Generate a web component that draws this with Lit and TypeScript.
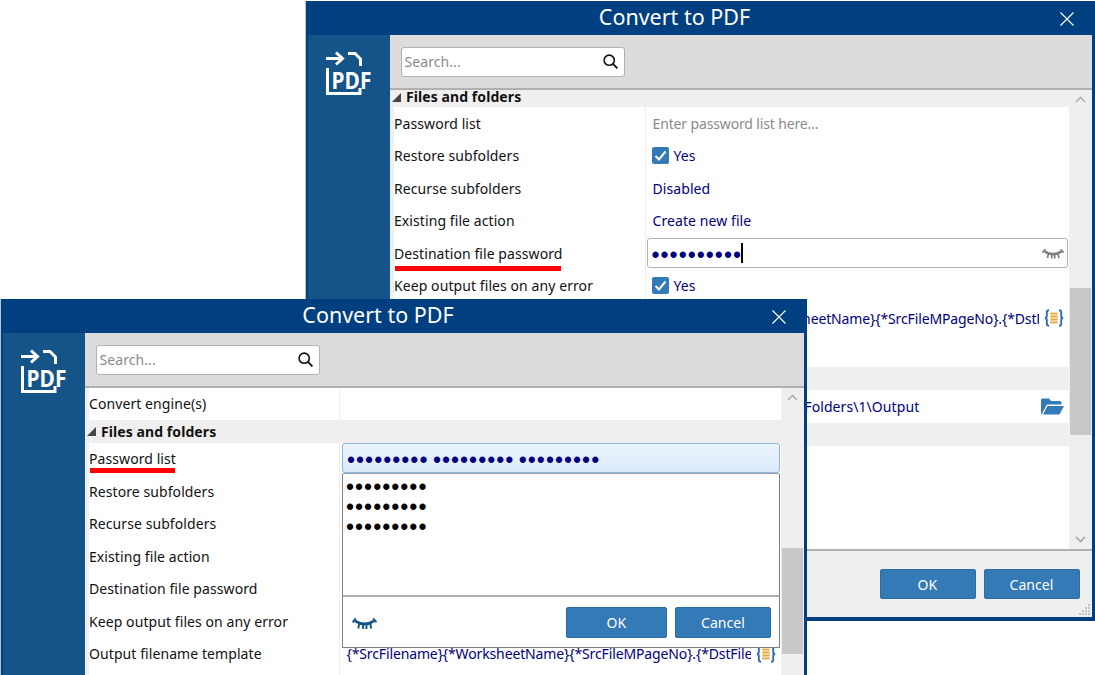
import { LitElement, html, css } from "lit";
import { customElement } from "lit/decorators.js";

const logo = html`<svg class="logo" viewBox="0 0 50 50" width="50" height="50">
  <g fill="none" stroke="#fff" stroke-width="3">
    <path d="M2 8.5H18M12 2.5L18.5 8.5L12 14.5"/>
    <path d="M24 3.5H31L36.5 9V16"/>
    <path d="M3.5 18V43.5H36V38"/>
  </g>
  <text x="7.5" y="38.5" font-size="23" font-weight="700" fill="#fff" font-family="'Noto Sans',sans-serif" textLength="40" lengthAdjust="spacingAndGlyphs">PDF</text>
</svg>`;

const searchIcon = html`<svg viewBox="0 0 16 16" width="17" height="17"><circle cx="6.8" cy="6.8" r="4.8" fill="none" stroke="#111" stroke-width="1.5"/><path d="M10.3 10.3L14.5 14.5" stroke="#111" stroke-width="1.8"/></svg>`;

const closeIcon = html`<svg viewBox="0 0 14 14" width="14" height="14"><path d="M.5.5L13.5 13.5M13.5.5L.5 13.5" stroke="#fff" stroke-width="1.2"/></svg>`;

const eye = (c: string, w: number) => html`<svg viewBox="0 0 26 13" width="${w}" height="${(w * 13) / 26}"><g fill="none" stroke="${c}" stroke-linecap="butt">
  <path d="M3 4Q13 10.5 23 4" stroke-width="3"/>
  <path d="M.5 5.5L4 1.5M25.5 5.5L22 1.5M7.5 7L6.5 12M11.5 8V12.5M15 8V12.5M19 7L20 12" stroke-width="2"/>
</g></svg>`;

const check = html`<svg viewBox="0 0 17 17" width="17" height="17"><rect width="17" height="17" rx="2" fill="#337ab7"/><path d="M3.5 9L7 12.5L13.5 4.5" fill="none" stroke="#fff" stroke-width="2"/></svg>`;

const braces = html`<svg viewBox="0 0 20 18" width="20" height="18">
  <path d="M5 1.2Q2.8 1.2 2.8 3.5V7Q2.8 9 .8 9Q2.8 9 2.8 11V14.5Q2.8 16.8 5 16.8M15 1.2Q17.2 1.2 17.2 3.5V7Q17.2 9 19.2 9Q17.2 9 17.2 11V14.5Q17.2 16.8 15 16.8" fill="none" stroke="#2a6fb0" stroke-width="1.9"/>
  <rect x="6" y="3.5" width="8" height="11" fill="#fbe3bd"/>
  <path d="M6.5 4.5H13.5M6.5 7.5H13.5M6.5 10.5H13.5M6.5 13.5H13.5" stroke="#e8a33c" stroke-width="1.5"/>
</svg>`;

const folder = html`<svg viewBox="0 0 23 17" width="23" height="17">
  <path d="M0 2Q0 .5 1.5 .5H8L10 3H19Q20.5 3 20.5 4.5V6.5H6L1.5 14.5V16H.5L0 15Z" fill="#337ab7"/>
  <path d="M6.5 8H23L18.5 16.5H2Z" fill="#337ab7"/>
</svg>`;

type Row = { label: string; value?: unknown; tall?: boolean; mark?: "long" | "short" };

@customElement("app-root")
export class AppRoot extends LitElement {
  static styles = css`
    :host { display: block; position: relative; width: 1095px; height: 675px; overflow: hidden; background: #fff; font-family: "Noto Sans", "Open Sans", sans-serif; font-size: 14px; color: #111; letter-spacing: .08px; }
    .win { position: absolute; display: flex; flex-direction: column; background: #004080; box-sizing: border-box; padding: 0 3.5px 4px 1.5px; border-left: 1px solid #b8c4d0; }
    .back { left: 305px; top: 1px; width: 790px; height: 620px; }
    .front { left: 0; top: 299px; width: 807px; height: 420px; }
    .title { height: 34px; flex: none; display: flex; align-items: center; justify-content: center; color: #fff; font-size: 21.5px; letter-spacing: 0; position: relative; padding: 0 50px 4px 0; box-sizing: border-box; }
    .close { position: absolute; right: 18px; top: 11px; display: flex; }
    .main { flex: 1; display: flex; min-height: 0; }
    .side { width: 82px; flex: none; background: #145488; padding: 15px 0 0 16px; box-sizing: border-box; }
    .logo { display: block; }
    .pane { flex: 1; min-width: 0; display: flex; flex-direction: column; background: #efefef; }
    .tools { flex: none; height: 53px; background: #dcdcdc; border-bottom: 2px solid #b0b0b0; display: flex; align-items: center; padding-left: 11px; }
    .search { width: 224px; height: 30px; box-sizing: border-box; border: 1.5px solid #b0b0b8; border-radius: 3px; background: #fff; display: flex; align-items: center; justify-content: space-between; padding: 0 5px 0 3px; color: #8a8a8a; }
    .body { flex: 1; min-height: 0; display: grid; grid-template-columns: 1fr 23px; }
    .list { min-width: 0; overflow: hidden; }
    .sect { height: 17px; padding-left: 2.5px; box-sizing: border-box; display: flex; align-items: flex-start; gap: 5px; font-weight: 700; background: #efefef; line-height: 14px; }
    .sect .tri { margin-top: 3px; }
    .sect.big { height: 23px; align-items: center; padding-top: 1px; }
    .sect.big .tri { margin-top: 0; }
    .tri { width: 0; height: 0; border-left: 9px solid transparent; border-bottom: 9px solid #444; }
    .rows { margin-left: 4px; background: #fff; }
    .rows.first { margin-top: -1px; }
    .row { height: 32.5px; display: grid; align-items: center; }
    .back .row { grid-template-columns: 252px 1fr; }
    .front .row { grid-template-columns: 251px 1fr; }
    .lab { height: 100%; padding-left: .5px; display: flex; align-items: center; border-right: 1px solid #eee; position: relative; box-sizing: border-box; }
    .mark { position: absolute; left: 1px; height: 5px; background: #f00; }
    .mark.long { width: 166px; bottom: -1px; }
    .mark.short { width: 85px; bottom: 2px; }
    .val { min-width: 0; padding: 0 5px 0 7px; color: #000080; display: flex; align-items: center; gap: 5px; }
    .val.chk { padding-left: 6px; }
    .clip { overflow: hidden; white-space: nowrap; flex: 1; min-width: 0; }
    .tpl { letter-spacing: -.13px; }
    .ph { color: #8a8a8a; letter-spacing: -.14px; }
    .dots { font-family: "Liberation Sans", sans-serif; font-size: 23px; letter-spacing: 1px; word-spacing: -3px; line-height: 20px; white-space: pre; }
    .low { padding-top: 3px; }
    .field { height: 30px; box-sizing: border-box; margin: 0 1px 0 1px; border: 1.5px solid #b0b0b8; border-radius: 3px; background: #fff; display: flex; align-items: center; padding: 0 3px 0 4px; color: #000080; }
    .caret { width: 1.5px; height: 20px; background: #000; margin-left: -1px; }
    .grow { flex: 1; }
    .tall { height: 65px; }
    .tall .val { align-self: start; height: 32.5px; }
    .tall .lab { align-items: flex-start; padding-top: 6px; }
    .gap { height: 23px; }
    .filler { height: 104px; background: #fff; margin-left: 4px; }
    .scroll { position: relative; background: #efefef; }
    .chev { position: absolute; left: 6px; }
    .chev.up { top: 6px; }
    .chev.down { bottom: 6px; }
    .thumb { position: absolute; left: 1px; right: 1px; background: #c8c8c8; }
    .thumb.b { top: 198px; height: 147px; }
    .thumb.f { top: 160px; height: 106px; }
    .foot { flex: none; height: 68px; border-top: 2px solid #b0b0b0; display: flex; justify-content: flex-end; align-items: center; gap: 8px; padding: 0 12px 0 0; background: #efefef; box-sizing: border-box; }
    .btn { width: 96px; height: 30px; box-sizing: border-box; background: #337ab7; border: 1px solid #2e6da4; border-radius: 2px; color: #fff; display: flex; align-items: center; justify-content: center; }
    .pw { position: absolute; left: 342px; top: 443px; width: 438px; display: flex; flex-direction: column; }
    .pwf { height: 30px; box-sizing: border-box; background: linear-gradient(#ecf4fd, #dbeafa); border: 1px solid #8db7e2; border-radius: 3px; color: #000080; display: flex; align-items: center; padding: 0 0 0 4px; }
    .pop { background: #fff; border: 1px solid #808080; border-top: 1px solid #a0a0a0; border-radius: 2px 2px 0 0; height: 175px; box-sizing: border-box; display: flex; flex-direction: column; }
    .pl { height: 123px; flex: none; border-bottom: 2px solid #b0b0b0; padding: 2.5px 0 0 3px; color: #000; box-sizing: border-box; }
    .pl div { height: 20px; }
    .pf { flex: 1; display: flex; align-items: center; gap: 8px; padding: 0 8px 0 9px; }
    .pf .eye { display: flex; margin-right: auto; margin-top: 2px; }
    .pf .btn.ok { width: 101px; }
    .pf .btn { height: 31px; }
    .grip { position: absolute; left: 1077px; top: 603px; }
  `;

  private row(r: Row) {
    return html`<div class="row ${r.tall ? "tall" : ""}">
      <div class="lab"><span>${r.label}</span>${r.mark ? html`<i class="mark ${r.mark}"></i>` : ""}</div>
      ${r.value ?? html`<div></div>`}
    </div>`;
  }

  private val(text: string, icon?: unknown, cls = "") {
    return html`<div class="val"><div class="clip ${cls}">${text}</div>${icon ?? ""}</div>`;
  }

  private chk() {
    return html`<div class="val chk">${check}<span>Yes</span></div>`;
  }

  private chrome(cls: string, body: unknown, thumb: string, foot: boolean) {
    return html`<section class="win ${cls}">
      <header class="title">Convert to PDF<span class="close">${closeIcon}</span></header>
      <div class="main">
        <aside class="side">${logo}</aside>
        <div class="pane">
          <div class="tools"><div class="search"><span>Search...</span>${searchIcon}</div></div>
          <div class="body">
            <div class="list">${body}</div>
            <div class="scroll">
              <svg class="chev up" viewBox="0 0 11 7" width="11" height="7"><path d="M1 6L5.5 1.5L10 6" fill="none" stroke="#b0b0b0" stroke-width="1.6"/></svg>
              <div class="thumb ${thumb}"></div>
              ${foot ? html`<svg class="chev down" viewBox="0 0 11 7" width="11" height="7"><path d="M1 1L5.5 5.5L10 1" fill="none" stroke="#a8a8a8" stroke-width="1.6"/></svg>` : ""}
            </div>
          </div>
          ${foot ? html`<div class="foot"><div class="btn">OK</div><div class="btn">Cancel</div></div>` : ""}
        </div>
      </div>
    </section>`;
  }

  render() {
    const tpl = "{*SrcFilename}{*WorksheetName}{*SrcFileMPageNo}.{*DstFileExt}";
    const ten = "••••••••••";
    const nine = "•••••••••";
    const backRows = html`
      <div class="sect"><i class="tri"></i>Files and folders</div>
      <div class="rows">
        ${this.row({ label: "Password list", value: html`<div class="val ph">Enter password list here...</div>` })}
        ${this.row({ label: "Restore subfolders", value: this.chk() })}
        ${this.row({ label: "Recurse subfolders", value: this.val("Disabled") })}
        ${this.row({ label: "Existing file action", value: this.val("Create new file") })}
        ${this.row({
          label: "Destination file password",
          mark: "long",
          value: html`<div class="field"><span class="dots low">${ten}</span><i class="caret"></i><span class="grow"></span>${eye("#808080", 22)}</div>`,
        })}
        ${this.row({ label: "Keep output files on any error", value: this.chk() })}
        ${this.row({ label: "Output filename template", tall: true, value: this.val(tpl, braces, "tpl") })}
      </div>
      <div class="gap"></div>
      <div class="rows">${this.row({ label: "Destination folder", value: this.val("C:\\Users\\Public\\Demo\\Folders\\1\\Output", folder) })}</div>
      <div class="gap"></div>
      <div class="filler"></div>
    `;
    const frontRows = html`
      <div class="rows first">${this.row({ label: "Convert engine(s)" })}</div>
      <div class="sect big"><i class="tri"></i>Files and folders</div>
      <div class="rows">
        ${this.row({ label: "Password list", mark: "short" })}
        ${this.row({ label: "Restore subfolders" })}
        ${this.row({ label: "Recurse subfolders" })}
        ${this.row({ label: "Existing file action" })}
        ${this.row({ label: "Destination file password" })}
        ${this.row({ label: "Keep output files on any error" })}
        ${this.row({ label: "Output filename template", value: this.val(tpl, braces, "tpl") })}
        ${this.row({ label: "" })}
      </div>
    `;
    return html`
      ${this.chrome("back", backRows, "b", true)}
      ${this.chrome("front", frontRows, "f", false)}
      <div class="pw">
        <div class="pwf"><span class="dots low">${nine} ${nine} ${nine}</span></div>
        <div class="pop">
          <div class="pl"><div class="dots">${nine}</div><div class="dots">${nine}</div><div class="dots">${nine}</div></div>
          <div class="pf"><span class="eye">${eye("#145488", 25)}</span><div class="btn ok">OK</div><div class="btn">Cancel</div></div>
        </div>
      </div>
      <svg class="grip" viewBox="0 0 14 14" width="14" height="14">
        <g fill="#c4c4c4"><rect x="11" y="1" width="2" height="2"/><rect x="8" y="4" width="2" height="2"/><rect x="11" y="4" width="2" height="2"/><rect x="5" y="7" width="2" height="2"/><rect x="8" y="7" width="2" height="2"/><rect x="11" y="7" width="2" height="2"/><rect x="2" y="10" width="2" height="2"/><rect x="5" y="10" width="2" height="2"/><rect x="8" y="10" width="2" height="2"/><rect x="11" y="10" width="2" height="2"/></g>
      </svg>
    `;
  }
}
